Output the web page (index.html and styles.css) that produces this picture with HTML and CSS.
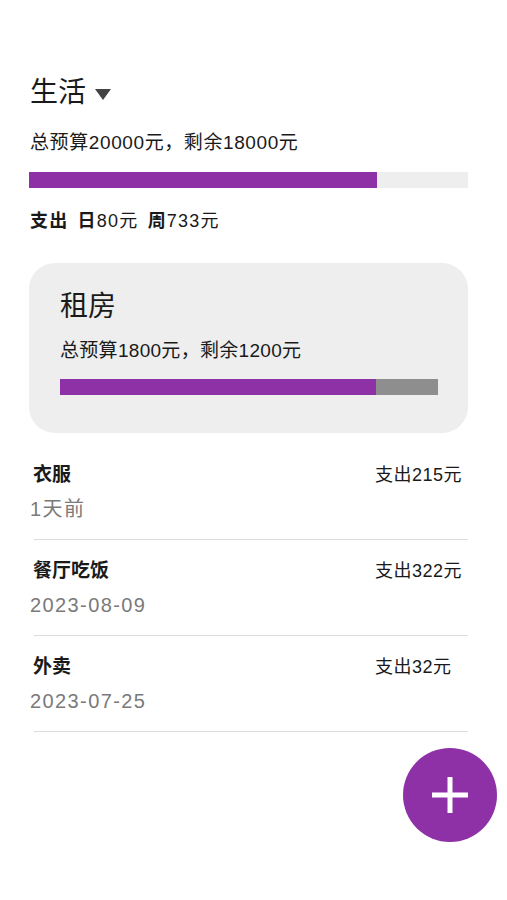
FILE: index.html
```html
<!DOCTYPE html>
<html lang="zh-CN">
<head>
    <meta charset="UTF-8">
    <meta name="viewport" content="width=device-width, initial-scale=1.0">
    <title>生活预算</title>
    <link rel="stylesheet" href="styles.css">
</head>
<body>
    <div class="page">
        <div class="book-title">
            <span>生活</span>
            <span class="caret"></span>
        </div>

        <div class="summary">总预算20000元，剩余18000元</div>
        <div class="progress">
            <div class="progress-fill" style="width: 79.3%"></div>
        </div>
        <div class="spend"><b>支出</b> <b>日</b>80元 <b>周</b>733元</div>

        <div class="category-card">
            <div class="card-title">租房</div>
            <div class="summary card-summary">总预算1800元，剩余1200元</div>
            <div class="progress progress-dark">
                <div class="progress-fill" style="width: 83.6%"></div>
            </div>
        </div>

        <div class="record-list">
            <div class="record">
                <div class="record-main">
                    <div class="record-name">衣服</div>
                    <div class="record-date">1天前</div>
                </div>
                <div class="record-amount">支出215元</div>
            </div>
            <div class="record">
                <div class="record-main">
                    <div class="record-name">餐厅吃饭</div>
                    <div class="record-date">2023-08-09</div>
                </div>
                <div class="record-amount">支出322元</div>
            </div>
            <div class="record">
                <div class="record-main">
                    <div class="record-name">外卖</div>
                    <div class="record-date">2023-07-25</div>
                </div>
                <div class="record-amount">支出32元</div>
            </div>
        </div>
    </div>

    <button class="fab" aria-label="添加">
        <svg width="36" height="36" viewBox="0 0 36 36">
            <rect x="15.5" y="0" width="5" height="36" fill="#fff"/>
            <rect x="0" y="15.5" width="36" height="5" fill="#fff"/>
        </svg>
    </button>
</body>
</html>
```

FILE: styles.css
```css
body {
    margin: 0;
    background: #fff;
    color: #1a1a1a;
    font-family: "Liberation Sans", "Noto Sans CJK SC", sans-serif;
}

.page {
    padding: 75px 39px 40px 29px;
}

.book-title {
    display: flex;
    align-items: center;
    gap: 9px;
    font-size: 28px;
    line-height: 36px;
    padding-left: 1px;
}

.caret {
    width: 0;
    height: 0;
    border-left: 8px solid transparent;
    border-right: 8px solid transparent;
    border-top: 11px solid #444;
    margin-top: 2px;
}

.summary {
    margin-top: 18px;
    font-size: 19px;
    line-height: 28px;
    letter-spacing: 0.6px;
    padding-left: 1px;
}

.progress {
    margin-top: 15px;
    height: 16px;
    background: #eeeeee;
}

.progress-fill {
    height: 100%;
    background: #8e30a6;
}

.progress-dark {
    background: #8e8e8e;
}

.spend {
    margin-top: 19px;
    font-size: 18px;
    line-height: 28px;
    letter-spacing: 1.2px;
    word-spacing: 3px;
    padding-left: 1px;
}

.spend b {
    font-weight: 700;
}

.category-card {
    margin-top: 28px;
    background: #eeeeee;
    border-radius: 26px;
    padding: 26px 30px 38px 31px;
}

.card-title {
    font-size: 28px;
    line-height: 36px;
}

.card-summary {
    margin-top: 12px;
    padding-left: 0;
    letter-spacing: 0.3px;
}

.category-card .progress {
    margin-top: 14px;
}

.record-list {
    margin-top: 11px;
}

.record {
    display: flex;
    padding: 17px 0 16px;
    margin-left: 5px;
    border-bottom: 1px solid #dcdcdc;
}

.record-main {
    flex: 1;
    margin-left: -5px;
}

.record-name {
    font-size: 19px;
    line-height: 28px;
    font-weight: 700;
    padding-left: 4px;
}

.record-date {
    margin-top: 6px;
    font-size: 20px;
    line-height: 28px;
    letter-spacing: 1.4px;
    color: #7a7a7a;
    padding-left: 1px;
}

.record-amount {
    width: 93px;
    font-size: 18px;
    line-height: 28px;
    letter-spacing: 0.5px;
}

.fab {
    position: absolute;
    left: 403px;
    top: 748px;
    width: 94px;
    height: 94px;
    border: none;
    border-radius: 50%;
    background: #8e30a6;
    display: flex;
    align-items: center;
    justify-content: center;
    padding: 0;
    cursor: pointer;
}
```
